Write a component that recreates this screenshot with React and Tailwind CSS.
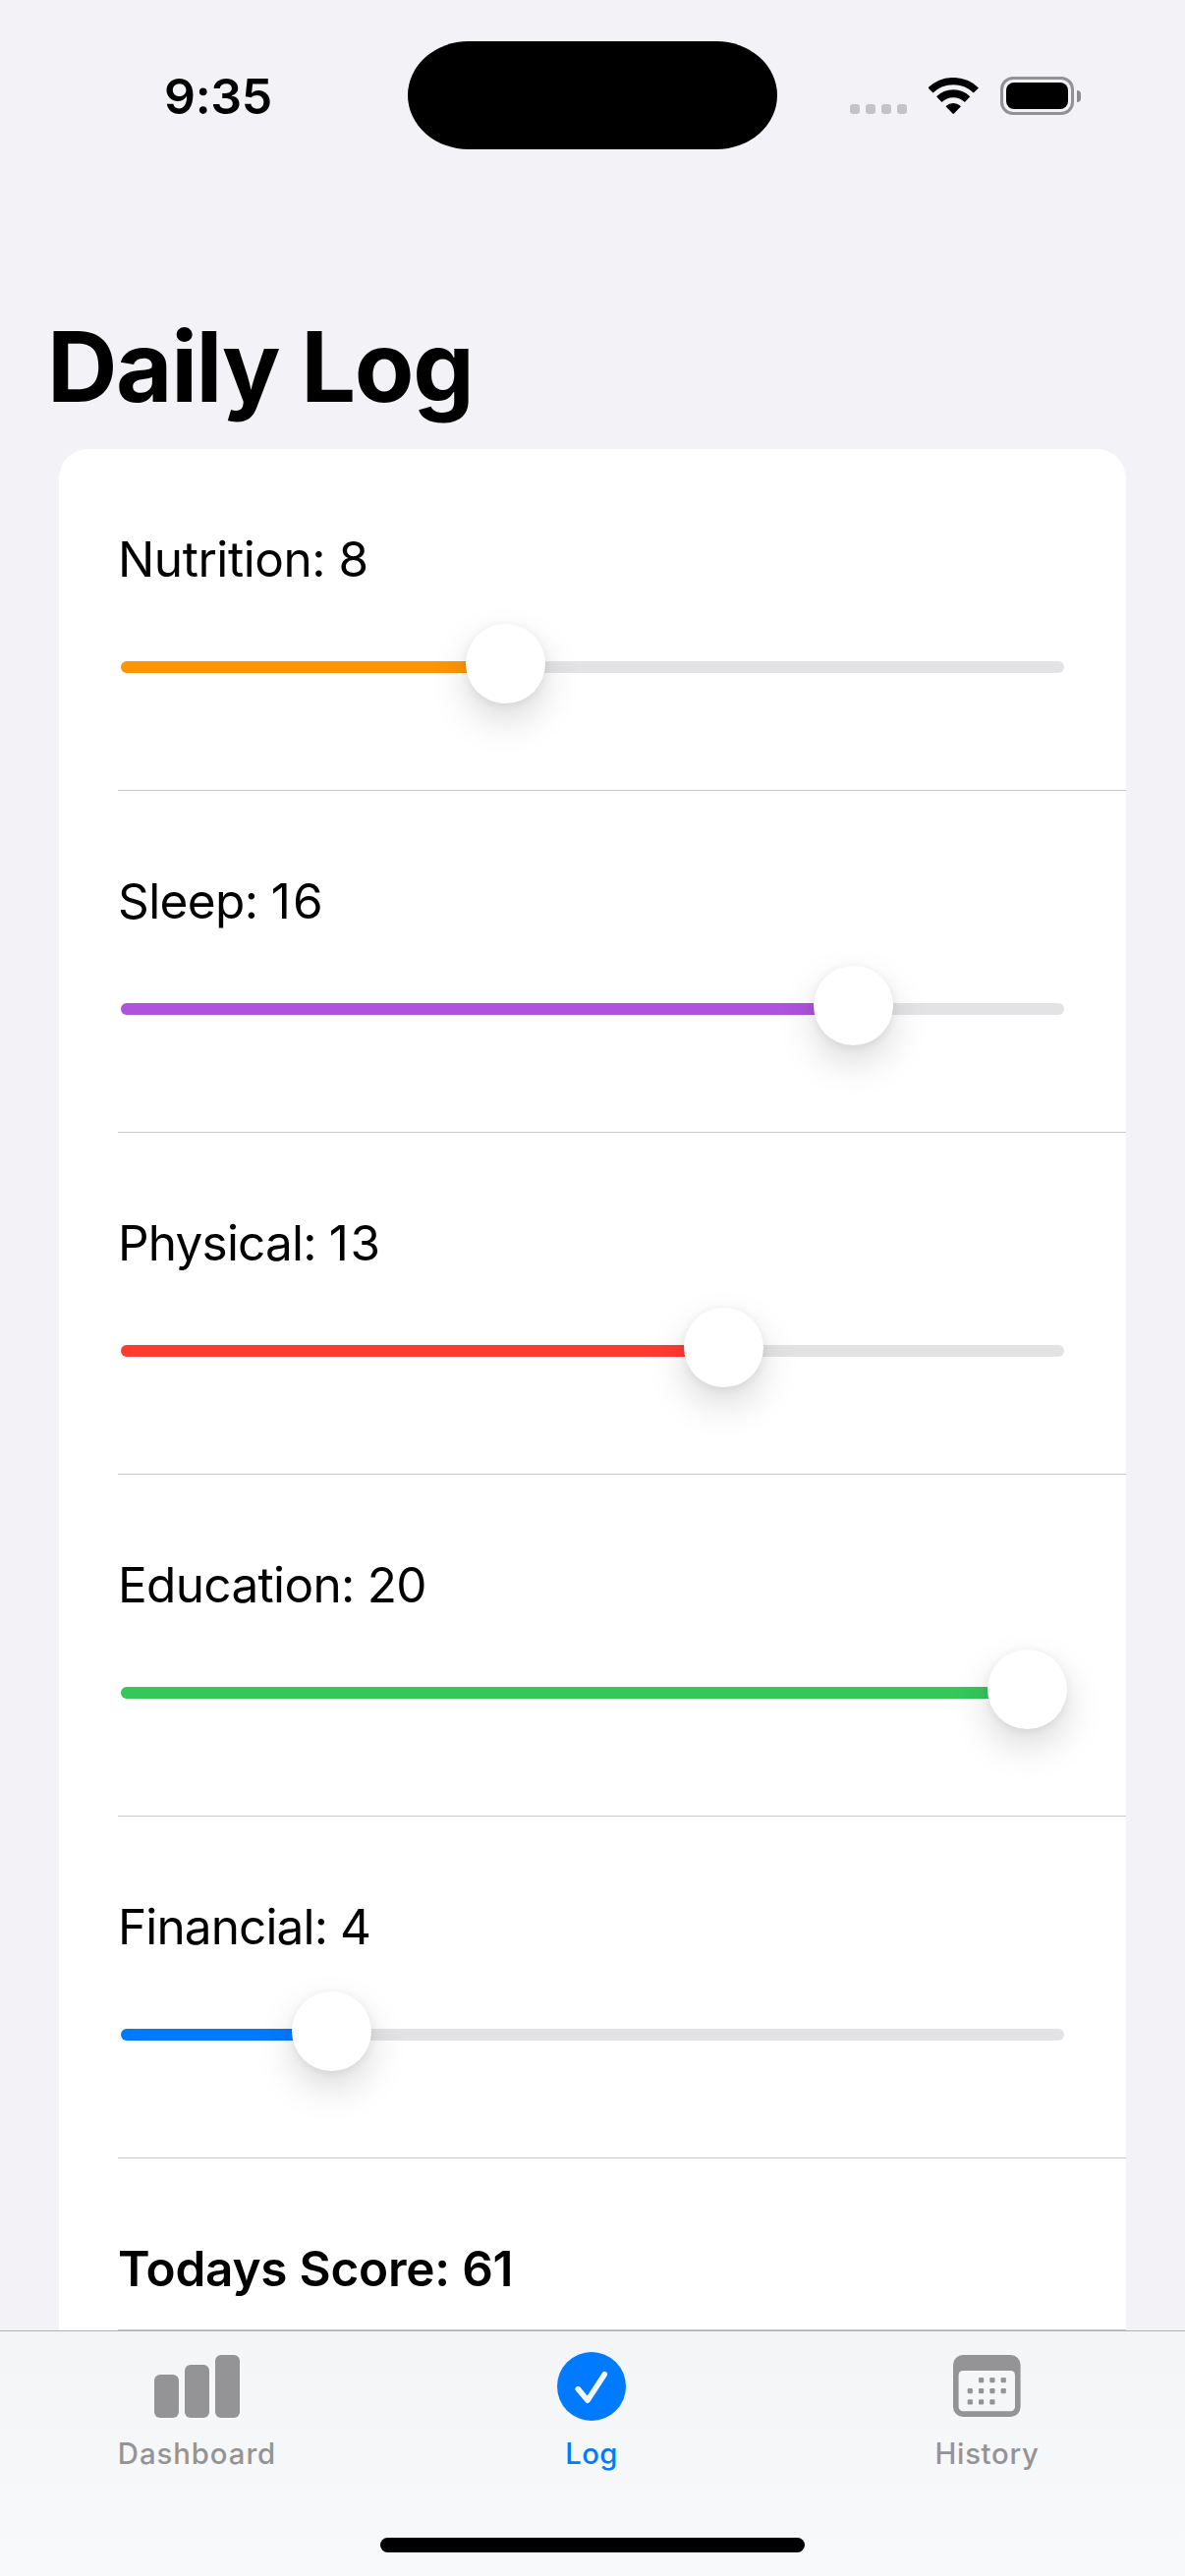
const entries = [
  { label: "Nutrition", value: 8, fill: "bg-[#ff9500]", tracking: "tracking-[-0.45px]", digits: "tracking-normal" },
  { label: "Sleep", value: 16, fill: "bg-[#af52de]", tracking: "tracking-[-0.6px]", digits: "tracking-[2px]" },
  { label: "Physical", value: 13, fill: "bg-[#ff3b30]", tracking: "tracking-[-0.8px]", digits: "tracking-[1.5px]" },
  { label: "Education", value: 20, fill: "bg-[#34c759]", tracking: "tracking-[-0.67px]", digits: "tracking-[-0.67px]" },
  { label: "Financial", value: 4, fill: "bg-[#007aff]", tracking: "tracking-[-0.88px]", digits: "tracking-normal" },
];

const TRACK_WIDTH = 966;
const KNOB = 81;
const MAX = 20;

function WifiIcon() {
  return (
    <svg width="51" height="38" viewBox="0 0 51 38" fill="none">
      <path d="M2 13A33.35 33.35 0 0 1 48.4 13" stroke="#000" strokeWidth="7.3" />
      <path d="M10.8 22.1A20.7 20.7 0 0 1 39.6 22.1" stroke="#000" strokeWidth="7.8" />
      <path
        d="M25.2 36.3L18.4 29.3A10.4 10.4 0 0 1 32 29.3Z"
        fill="#000"
        stroke="#000"
        strokeWidth="1.4"
        strokeLinejoin="round"
      />
    </svg>
  );
}

function BatteryIcon() {
  return (
    <div className="flex items-center gap-[3px]">
      <div className="h-[39px] w-[75px] rounded-[13px] border-[3px] border-[#929295] p-[3px]">
        <div className="h-[27px] w-[63px] rounded-[8px] bg-black" />
      </div>
      <div className="h-[12px] w-[4px] rounded-r-full bg-[#8a8a8d]" />
    </div>
  );
}

function StatusBar() {
  return (
    <div className="flex h-[195px] shrink-0 items-start">
      <div className="mt-[68px] ml-[167px] w-[114px] text-[50px] leading-[60px] font-semibold tracking-[-0.3px]">
        9:35
      </div>
      <div className="mt-[42px] ml-[134px] h-[110px] w-[376px] rounded-[62px/55px] bg-black" />
      <div className="mt-[78px] ml-[74px] flex h-[39px] items-end">
        <div className="mb-px flex gap-[6px]">
          {[0, 1, 2, 3].map((dot) => (
            <div key={dot} className="size-[10px] rounded-[3px] bg-[#c4c4c8]" />
          ))}
        </div>
        <div className="ml-[22px]">
          <WifiIcon />
        </div>
        <div className="ml-[22px]">
          <BatteryIcon />
        </div>
      </div>
    </div>
  );
}

function Slider({ value, fill }) {
  const left = Math.ceil(((TRACK_WIDTH - KNOB) * value) / MAX);
  return (
    <div className="relative h-[81px] w-[966px]">
      <div className="px-[3px] pt-[38px]">
        <div className="h-[12px] overflow-hidden rounded-full bg-[#e3e3e5]">
          <div className={`h-full ${fill}`} style={{ width: left + KNOB / 2 }} />
        </div>
      </div>
      <div
        className="absolute top-0 size-[81px] rounded-full bg-white shadow-[0_17px_38px_rgba(0,0,0,0.15),0_2px_10px_rgba(0,0,0,0.07)]"
        style={{ left }}
      />
    </div>
  );
}

function LogRow({ label, value, fill, tracking, digits }) {
  return (
    <div className="h-[348px] shrink-0 border-b border-[#c6c6c8] pt-[82px]">
      <div className={`text-[49.5px] leading-[60px] ${tracking}`}>
        {label}: <span className={digits}>{value}</span>
      </div>
      <div className="mt-[36px]">
        <Slider value={value} fill={fill} />
      </div>
    </div>
  );
}

function BarsIcon() {
  return (
    <div className="flex h-[67px] items-end gap-[6px]">
      <div className="h-[44px] w-[25px] rounded-[6px] bg-[#949496]" />
      <div className="h-[54px] w-[25px] rounded-[6px] bg-[#949496]" />
      <div className="h-[64px] w-[25px] rounded-[6px] bg-[#949496]" />
    </div>
  );
}

function CheckIcon() {
  return (
    <svg width="70" height="70" viewBox="0 0 70 70" fill="none">
      <circle cx="35" cy="35" r="35" fill="#007aff" />
      <path
        d="M21.3 37.6L31 49.2L48.3 22.7"
        stroke="#f5f6f8"
        strokeWidth="5.6"
        strokeLinecap="round"
        strokeLinejoin="round"
      />
    </svg>
  );
}

const calendarDots = [
  [26, 23], [37.3, 23], [48.6, 23],
  [14.7, 34], [26, 34], [37.3, 34], [48.6, 34],
  [14.7, 45.2], [26, 45.2], [37.3, 45.2],
];

function CalendarIcon() {
  return (
    <svg width="69" height="63" viewBox="0 0 69 63" fill="none">
      <rect width="68.6" height="63" rx="10" fill="#949496" />
      <rect x="5.6" y="16" width="57.4" height="41.3" rx="4.5" fill="#f5f6f7" />
      {calendarDots.map(([x, y]) => (
        <rect key={`${x}-${y}`} x={x} y={y} width="5.2" height="5.2" rx="1.2" fill="#949496" />
      ))}
    </svg>
  );
}

function Tab({ icon, label, className }) {
  return (
    <div className="flex flex-col items-center pt-[21px]">
      <div className="flex h-[70px]">{icon}</div>
      <div className={`mt-[16px] text-[29.3px] leading-[36px] font-medium ${className}`}>{label}</div>
    </div>
  );
}

function TabBar() {
  return (
    <div className="flex h-[250px] shrink-0 flex-col border-t border-[#b2b2b4] bg-linear-to-b from-[#f4f5f7] to-[#f8f9fb]">
      <div className="grid h-[210px] grid-cols-[401px_402px_403px]">
        <Tab icon={<BarsIcon />} label="Dashboard" className="tracking-[0.95px] text-[#949496]" />
        <Tab icon={<CheckIcon />} label="Log" className="tracking-[0.3px] text-[#007aff]" />
        <Tab
          icon={<div className="pt-[3px]"><CalendarIcon /></div>}
          label="History"
          className="tracking-[0.7px] text-[#949496]"
        />
      </div>
      <div className="mx-auto h-[15px] w-[432px] rounded-full bg-black" />
    </div>
  );
}

export default function App() {
  return (
    <div className="flex h-[2622px] w-[1206px] flex-col overflow-hidden bg-[#f2f2f7] font-['Inter',sans-serif] text-black">
      <StatusBar />
      <h1 className="mt-[118px] ml-[48px] shrink-0 text-[99px] leading-[120px] font-bold tracking-[-1.4px]">
        Daily Log
      </h1>
      <div className="mx-[60px] mt-[24px] flex h-[1915px] shrink-0 flex-col overflow-hidden rounded-t-[30px] bg-white pl-[60px]">
        {entries.map((entry) => (
          <LogRow key={entry.label} {...entry} />
        ))}
        <div className="h-[175px] shrink-0 border-b border-[#c6c6c8] pt-[82px] text-[49.5px] leading-[60px] font-semibold tracking-[-0.24px]">
          Todays Score: 61
        </div>
      </div>
      <TabBar />
    </div>
  );
}
